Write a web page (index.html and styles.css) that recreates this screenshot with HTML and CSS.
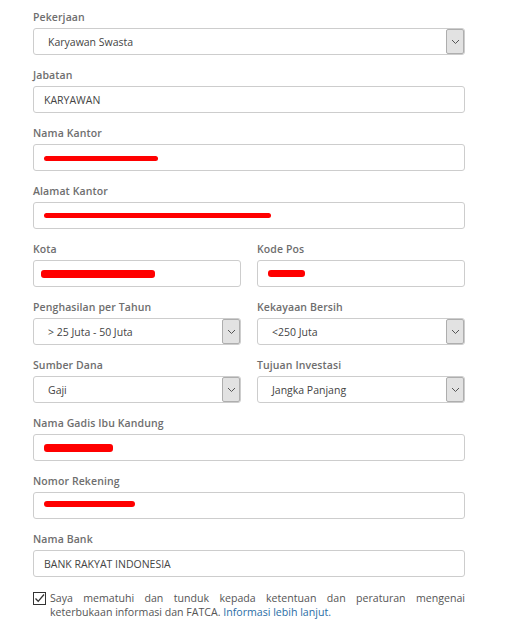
FILE: index.html
```html
<!DOCTYPE html>
<html>
<head>
<meta charset="utf-8">
<link rel="stylesheet" href="styles.css">
</head>
<body>
<form class="form">
  <div class="field">
    <div class="label">Pekerjaan</div>
    <div class="box select"><span class="val">Karyawan Swasta</span><span class="btn"><svg width="9" height="6" viewBox="0 0 9 6"><path d="M1 1 L4.5 4.5 L8 1" fill="none" stroke="#555" stroke-width="1"/></svg></span></div>
  </div>
  <div class="field">
    <div class="label">Jabatan</div>
    <div class="box"><span class="val">KARYAWAN</span></div>
  </div>
  <div class="field">
    <div class="label">Nama Kantor</div>
    <div class="box"><span class="redact r1"></span></div>
  </div>
  <div class="field">
    <div class="label">Alamat Kantor</div>
    <div class="box"><span class="redact r2"></span></div>
  </div>
  <div class="row">
    <div class="field">
      <div class="label">Kota</div>
      <div class="box"><span class="redact r3"></span></div>
    </div>
    <div class="field">
      <div class="label">Kode Pos</div>
      <div class="box"><span class="redact r4"></span></div>
    </div>
  </div>
  <div class="row">
    <div class="field">
      <div class="label">Penghasilan per Tahun</div>
      <div class="box select"><span class="val">&gt; 25 Juta - 50 Juta</span><span class="btn"><svg width="9" height="6" viewBox="0 0 9 6"><path d="M1 1 L4.5 4.5 L8 1" fill="none" stroke="#555" stroke-width="1"/></svg></span></div>
    </div>
    <div class="field">
      <div class="label">Kekayaan Bersih</div>
      <div class="box select"><span class="val">&lt;250 Juta</span><span class="btn"><svg width="9" height="6" viewBox="0 0 9 6"><path d="M1 1 L4.5 4.5 L8 1" fill="none" stroke="#555" stroke-width="1"/></svg></span></div>
    </div>
  </div>
  <div class="row">
    <div class="field">
      <div class="label">Sumber Dana</div>
      <div class="box select"><span class="val">Gaji</span><span class="btn"><svg width="9" height="6" viewBox="0 0 9 6"><path d="M1 1 L4.5 4.5 L8 1" fill="none" stroke="#555" stroke-width="1"/></svg></span></div>
    </div>
    <div class="field">
      <div class="label">Tujuan Investasi</div>
      <div class="box select"><span class="val">Jangka Panjang</span><span class="btn"><svg width="9" height="6" viewBox="0 0 9 6"><path d="M1 1 L4.5 4.5 L8 1" fill="none" stroke="#555" stroke-width="1"/></svg></span></div>
    </div>
  </div>
  <div class="field">
    <div class="label">Nama Gadis Ibu Kandung</div>
    <div class="box"><span class="redact r5"></span></div>
  </div>
  <div class="field">
    <div class="label">Nomor Rekening</div>
    <div class="box"><span class="redact r6"></span></div>
  </div>
  <div class="field">
    <div class="label">Nama Bank</div>
    <div class="box"><span class="val">BANK RAKYAT INDONESIA</span></div>
  </div>
  <div class="agree">
    <span class="check"><svg width="13" height="13" viewBox="0 0 13 13"><rect x="0.5" y="0.5" width="12" height="12" fill="#fff" stroke="#333" stroke-width="1"/><path d="M2.5 6.5 L5.2 9.3 L11 2.5" fill="none" stroke="#333" stroke-width="1.3"/></svg></span>
    <p class="agree-text">Saya mematuhi dan tunduk kepada ketentuan dan peraturan mengenai keterbukaan informasi dan FATCA. <a class="link">Informasi lebih lanjut.</a></p>
  </div>
</form>
</body>
</html>
```
FILE: styles.css
```css
* { box-sizing: border-box; }
html, body { margin: 0; padding: 0; background: #fff; }
body { font-family: "Open Sans", "Liberation Sans", sans-serif; }
.form { width: 432px; margin-left: 33px; padding-top: 10px; }
.field { margin-bottom: 13px; }
.label {
  font-size: 10.5px; line-height: 14px; font-weight: 600;
  color: #6e6e6e; margin-bottom: 4px; letter-spacing: 0.1px;
}
.row { display: grid; grid-template-columns: 208px 208px; column-gap: 16px; }
.box {
  height: 27px; border: 1px solid #cdcdcd; border-radius: 3px;
  display: flex; align-items: center; padding-left: 10px; background: #fff;
  position: relative;
}
.val { font-size: 10.5px; color: #444; flex: 1; white-space: nowrap; }
.select { padding-left: 14px; padding-right: 0; }
.btn {
  width: 18px; height: 25px; background: #e2e2e2; border: 1px solid #aeaeae;
  border-radius: 2px; display: flex; align-items: center; justify-content: center;
  margin-right: 0;
}
.redact { display: block; background: #f00; border-radius: 3px; }
.r1 { width: 114px; height: 5px; margin-top: 1px; }
.r2 { width: 227px; height: 5px; margin-top: 0; }
.r3 { width: 114px; height: 8px; margin-left: -3px; }
.r4 { width: 37px; height: 7px; }
.r5 { width: 69px; height: 8px; }
.r6 { width: 91px; height: 6px; margin-top: -3px; }
.agree { display: flex; align-items: flex-start; margin-top: 14px; }
.check { width: 13px; height: 13px; margin-top: 1px; margin-right: 4px; flex: none; display: block; }
.check svg { display: block; }
.agree-text {
  margin: 0; font-size: 10.6px; line-height: 14px; color: #555; text-align: justify; flex: 1;
}
.link { color: #2a6ea6; text-decoration: none; }
```
